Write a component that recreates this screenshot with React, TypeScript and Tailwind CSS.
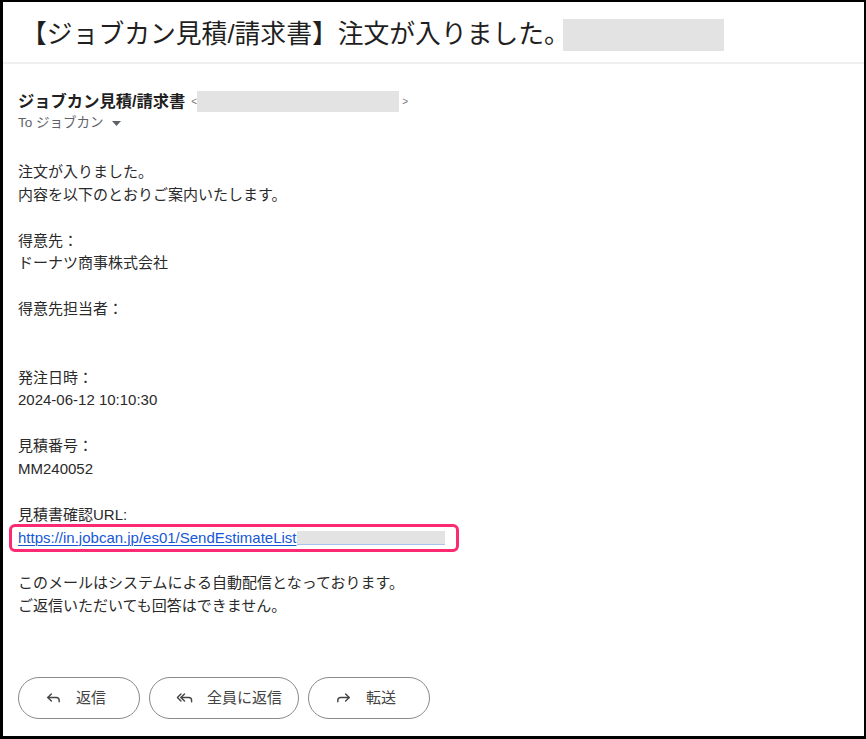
import React from "react";
import { Reply, ReplyAll, Forward } from "lucide-react";

const font = "font-['Liberation_Sans','Noto_Sans_CJK_JP',sans-serif]";

const bodyLines: string[] = [
    "注文が入りました。",
    "内容を以下のとおりご案内いたします。",
    "",
    "得意先：",
    "ドーナツ商事株式会社",
    "",
    "得意先担当者：",
    "",
    "",
    "発注日時：",
    "2024-06-12 10:10:30",
    "",
    "見積番号：",
    "MM240052",
    "",
    "見積書確認URL:",
];

const footerLines = ["このメールはシステムによる自動配信となっております。", "ご返信いただいても回答はできません。"];

function ActionButton({ icon, label, width }: { icon: React.ReactNode; label: string; width: string }) {
    return (
        <button className={`flex items-center h-[42px] ${width} pl-[26px] gap-[14px] rounded-full border border-[#8a8a8a] text-[15px] text-[#444]`}>
            {icon}
            <span>{label}</span>
        </button>
    );
}

export default function App() {
    return (
        <div className={`w-[866px] h-[739px] bg-white border-2 border-l-[3px] border-b-[3px] border-black overflow-hidden ${font}`}>
            {/* subject */}
            <div className="h-[62px] pt-[6px] pl-[18px] flex items-center border-b-2 border-[#f0f0f0]">
                <h1 className="text-[25.8px] leading-none text-[#1f1f1f]">【ジョブカン見積/請求書】注文が入りました。</h1>
                <div className="-ml-[7px] w-[161px] h-[32px] bg-[#e3e3e3]" />
            </div>

            <div className="pl-[15px] pt-[26px]">
                {/* sender */}
                <div className="flex items-center h-[22px]">
                    <span className="text-[16.3px] font-bold text-[#1f1f1f]">ジョブカン見積/請求書</span>
                    <span className="ml-[6px] text-[10px] text-[#777]">&lt;</span>
                    <div className="w-[202px] h-[21px] bg-[#e3e3e3]" />
                    <span className="ml-[3px] text-[10px] text-[#777]">&gt;</span>
                </div>
                <div className="flex items-center h-[23px] text-[13.5px] text-[#5f6368]">
                    <span>To ジョブカン</span>
                    <svg className="ml-[8px]" width="9" height="6" viewBox="0 0 9 6">
                        <path d="M0 0 H9 L4.5 5 Z" fill="#5f6368" />
                    </svg>
                </div>

                {/* body */}
                <div className="mt-[26px] text-[15px] leading-[22.85px] text-[#2a2a2a]">
                    {bodyLines.map((line, i) => (
                        <div key={i} className="h-[22.85px]">{line}</div>
                    ))}
                    <div className="h-[22.85px] flex items-center">
                        <div className="-ml-[9px] flex items-center h-[28px] pl-[6px] pr-[9px] w-[450px] border-[3px] border-[#fb2a72] rounded-[6px]">
                            <a href="#" className="text-[#1558d6] underline decoration-1 underline-offset-[2px]">https://in.jobcan.jp/es01/SendEstimateList</a>
                            <div className="w-[148px] h-[14px] bg-[#e3e3e3] border-b border-[#a8c3f0]" />
                        </div>
                    </div>
                    <div className="h-[22.85px]" />
                    {footerLines.map((line, i) => (
                        <div key={i} className="h-[22.85px]">{line}</div>
                    ))}
                </div>

                {/* actions */}
                <div className="mt-[59px] flex gap-[9px]">
                    <ActionButton width="w-[122px]" label="返信" icon={<Reply size={17} strokeWidth={2} color="#444" />} />
                    <ActionButton width="w-[150px] pl-[16px]" label="全員に返信" icon={<ReplyAll size={17} strokeWidth={2} color="#444" />} />
                    <ActionButton width="w-[122px]" label="転送" icon={<Forward size={17} strokeWidth={2} color="#444" />} />
                </div>
            </div>
        </div>
    );
}
